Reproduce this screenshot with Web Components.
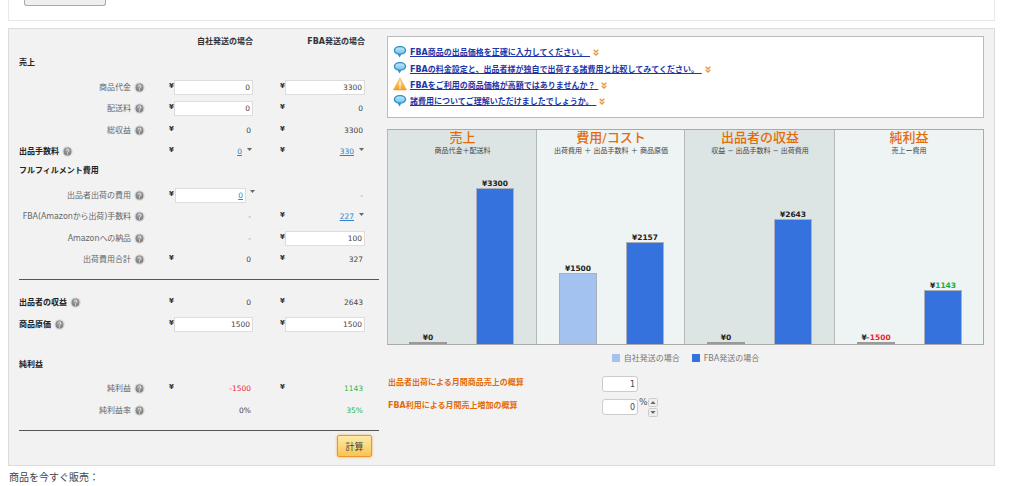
<!DOCTYPE html>
<html lang="ja"><head><meta charset="utf-8"><title>FBA</title>
<style>
html,body{margin:0;padding:0;background:#fff;overflow:hidden;height:486px}
body{font-family:"DejaVu Sans","Noto Sans CJK JP",sans-serif;font-size:8px;color:#444}
</style></head><body>
<x-page>
  <x-topbox></x-topbox>
  <x-panel>
    <x-calc slot="left">
      <x-row h="22"><span slot="a" class="hd">自社発送の場合</span><span slot="b" class="hd">FBA発送の場合</span></x-row>
      <x-row h="20"><x-label slot="label" strong nohelp>売上</x-label></x-row>
      <x-row mt="4.25"><x-label slot="label">商品代金</x-label><x-money slot="a" mode="field" value="0"></x-money><x-money slot="b" mode="field" value="3300"></x-money></x-row>
      <x-row><x-label slot="label">配送料</x-label><x-money slot="a" mode="field" value="0"></x-money><x-money slot="b" value="0"></x-money></x-row>
      <x-row><x-label slot="label">総収益</x-label><x-money slot="a" value="0"></x-money><x-money slot="b" value="3300"></x-money></x-row>
      <x-row><x-label slot="label" strong>出品手数料</x-label><x-money slot="a" mode="link" value="0"></x-money><x-money slot="b" mode="link" value="330"></x-money></x-row>
      <x-row h="16"><x-label slot="label" strong nohelp>フルフィルメント費用</x-label></x-row>
      <x-row mt="6"><x-label slot="label">出品者出荷の費用</x-label><x-money slot="a" mode="fieldlink" value="0"></x-money><x-money slot="b" noyen value="-" color="#888"></x-money></x-row>
      <x-row><x-label slot="label" class="tight">FBA(Amazonから出荷)手数料</x-label><x-money slot="a" noyen value="-" color="#888"></x-money><x-money slot="b" mode="link" value="227"></x-money></x-row>
      <x-row><x-label slot="label" class="tight">Amazonへの納品</x-label><x-money slot="a" noyen value="-" color="#888"></x-money><x-money slot="b" mode="field" value="100"></x-money></x-row>
      <x-row><x-label slot="label">出荷費用合計</x-label><x-money slot="a" value="0"></x-money><x-money slot="b" value="327"></x-money></x-row>
      <x-rule mt="9"></x-rule>
      <x-row mt="11.5"><x-label slot="label" strong>出品者の収益</x-label><x-money slot="a" value="0"></x-money><x-money slot="b" value="2643"></x-money></x-row>
      <x-row><x-label slot="label" strong>商品原価</x-label><x-money slot="a" mode="field" value="1500"></x-money><x-money slot="b" mode="field" value="1500"></x-money></x-row>
      <x-row h="16" mt="21.75"><x-label slot="label" strong nohelp>純利益</x-label></x-row>
      <x-row mt="5.25"><x-label slot="label">純利益</x-label><x-money slot="a" value="-1500" color="#f0283c"></x-money><x-money slot="b" value="1143" color="#1fb84a"></x-money></x-row>
      <x-row><x-label slot="label">純利益率</x-label><x-money slot="a" noyen value="0%"></x-money><x-money slot="b" noyen value="35%" color="#1fb84a"></x-money></x-row>
      <x-rule mt="9"></x-rule>
      <x-calc-btn>計算</x-calc-btn>
    </x-calc>
    <x-side slot="right">
      <x-notes>
        <x-tip icon="bubble">FBA商品の出品価格を正確に入力してください。&nbsp;</x-tip>
        <x-tip icon="bubble">FBAの料金設定と、出品者様が独自で出荷する諸費用と比較してみてください。&nbsp;</x-tip>
        <x-tip icon="warn">FBAをご利用の商品価格が高額ではありませんか？&nbsp;</x-tip>
        <x-tip icon="bubble">諸費用についてご理解いただけましたでしょうか。&nbsp;</x-tip>
      </x-notes>
      <x-chart>
        <x-chart-col title="売上" sub="商品代金＋配送料" tone="a">
          <x-bar zero v="¥0"></x-bar><x-bar h="156" v="¥3300"></x-bar>
        </x-chart-col>
        <x-chart-col title="費用/コスト" sub="出荷費用 ＋ 出品手数料 ＋ 商品原価" tone="b">
          <x-bar h="71" light v="¥1500"></x-bar><x-bar h="102" v="¥2157"></x-bar>
        </x-chart-col>
        <x-chart-col title="出品者の収益" sub="収益 − 出品手数料 − 出荷費用" tone="a">
          <x-bar zero v="¥0"></x-bar><x-bar h="125" v="¥2643"></x-bar>
        </x-chart-col>
        <x-chart-col title="純利益" sub="売上ー費用" tone="b">
          <x-bar zero v="¥" n="-1500" c="#f01e32"></x-bar><x-bar h="54" v="¥" n="1143" c="#12b040"></x-bar>
        </x-chart-col>
      </x-chart>
      <x-legend></x-legend>
      <x-estimate label="出品者出荷による月間商品売上の概算" value="1"></x-estimate>
      <x-estimate label="FBA利用による月間売上増加の概算" value="0" spin></x-estimate>
    </x-side>
  </x-panel>
  <x-sell>商品を今すぐ販売：</x-sell>
</x-page>
<script>
const def=(name,css,html,init)=>{
  customElements.define(name,class extends HTMLElement{
    constructor(){super();this.attachShadow({mode:'open'})}
    connectedCallback(){
      const h=typeof html==='function'?html(this):html;
      this.shadowRoot.innerHTML='<style>'+css+'</style>'+h;
      if(init)init(this);
    }
  });
};
const F='"DejaVu Sans","Noto Sans CJK JP",sans-serif';

def('x-page',`:host{display:block;margin-left:8px;width:987px;height:486px;overflow:hidden;font-family:${F}}`,'<slot></slot>');

def('x-topbox',`:host{display:block;box-sizing:border-box;height:21px;background:#fff;border:1px solid #e8e8e8;border-top:0;padding-left:15px;margin-bottom:7px}
.b{box-sizing:border-box;width:82px;height:6px;background:#efefef;border:1px solid #a9a9a9;border-top:0;border-radius:0 0 3px 3px}`,'<div class="b"></div>');

def('x-panel',`:host{display:flex;box-sizing:border-box;height:438px;background:#f2f2f2;border:1px solid #dcdcdc;padding:1px 0 0 10px;gap:8px}`,
 '<slot name="left"></slot><slot name="right"></slot>');

def('x-calc',`:host{display:flex;flex-direction:column;width:360px}`,'<slot></slot>');

def('x-row',`:host{display:grid;grid-template-columns:127px 24px 83px 28px 84px 14px;align-items:center;height:var(--h,21.5px);margin-top:var(--mt,0);color:#444}
.a{grid-column:3;display:block}.b{grid-column:5;display:block}.l{grid-column:1;display:block}
::slotted(.hd){display:block;text-align:right;font-weight:700;color:#333;font-size:8px;line-height:10px;padding-top:2px}`,
 `<div class="l"><slot name="label"></slot></div><div class="a"><slot name="a"></slot></div><div class="b"><slot name="b"></slot></div>`,
 el=>{ if(el.hasAttribute('h'))el.style.setProperty('--h',el.getAttribute('h')+'px');
       if(el.hasAttribute('mt'))el.style.setProperty('--mt',el.getAttribute('mt')+'px'); });

const help=`<svg width="11" height="11" viewBox="0 0 11 11" style="flex:none"><defs><radialGradient id="hg" cx=".5" cy=".35" r=".7"><stop offset="0" stop-color="#a8a8a8"/><stop offset="1" stop-color="#777"/></radialGradient></defs><circle cx="5.5" cy="5.5" r="5.2" fill="#d8d8d8"/><circle cx="5.5" cy="5.5" r="3.9" fill="url(#hg)"/><path d="M4.2 4.4a1.4 1.3 0 1 1 1.9 1.2c-.5.2-.6.5-.6.9" fill="none" stroke="#eee" stroke-width=".9"/><circle cx="5.5" cy="7.9" r=".55" fill="#eee"/></svg>`;

def('x-label',`:host{display:flex;align-items:center;gap:3px;height:11px;font-size:8px;line-height:11px;color:#666;white-space:nowrap;justify-content:flex-end;padding-right:1px}
:host(.tight) span{letter-spacing:-.1px}
:host([strong]){justify-content:flex-start;font-weight:700;color:#222}
:host([nohelp]){color:#222}`,
 el=>`<span><slot></slot></span>${el.hasAttribute('nohelp')?'':help}`);

const caret=`<svg width="5" height="3" viewBox="0 0 5 3" class="c"><path d="M0 0h5L2.5 3z" fill="#666"/></svg>`;
def('x-money',`:host{display:flex;align-items:center;height:15px;font-size:7.5px;color:var(--c,#444);white-space:nowrap}
.y{flex:none;width:4px;font-weight:700;color:#333;font-size:7px;line-height:8px;margin-bottom:3px;margin-left:-1px;margin-right:1px}
.rest{flex:1;text-align:right;padding-right:2px;line-height:15px}
.f{flex:1;box-sizing:border-box;height:15px;background:#fff;border:1px solid #ddd;text-align:right;padding-right:2px;line-height:14px;color:#444}
.fw{display:flex;flex:1;align-items:flex-start;gap:4px}
.fw .f{flex:none;width:71px;margin-left:1px}
.fw .c{margin-top:2px}
a{color:#2e7fd0;text-decoration:underline}
.lk{flex:1;display:flex;justify-content:flex-end;align-items:center;gap:5px;padding-right:1px}
.lk .c{margin-bottom:4px}`,
 el=>{
  const v=el.getAttribute('value'),m=el.getAttribute('mode')||'plain';
  const c=el.getAttribute('color'); if(c)el.style.setProperty('--c',c);
  const y=el.hasAttribute('noyen')?'<span class="y"></span>':'<span class="y">¥</span>';
  if(m==='field')return y+`<span class="f">${v}</span>`;
  if(m==='link')return y+`<span class="lk"><a>${v}</a>${caret}</span>`;
  if(m==='fieldlink')return y+`<span class="fw"><span class="f"><a>${v}</a></span>${caret}</span>`;
  return y+`<span class="rest">${v}</span>`;
 });

def('x-rule',`:host{display:block;height:0;border-top:1.5px solid #555;margin-top:var(--mt,0)}`,'',
 el=>el.style.setProperty('--mt',el.getAttribute('mt')+'px'));

def('x-calc-btn',`:host{display:flex;align-items:center;justify-content:center;align-self:flex-end;box-sizing:border-box;width:35px;height:22px;margin:4.5px 7px 0 0;
 background:linear-gradient(#fdeba9,#f7c552);border:1px solid #ee922b;border-radius:2px;box-shadow:0 0 3px #f4b266;font-size:9px;color:#444}`,'<slot></slot>');

def('x-side',`:host{display:flex;flex-direction:column;width:597px;padding-top:6px}`,'<slot></slot>');

def('x-notes',`:host{display:flex;flex-direction:column;box-sizing:border-box;height:82px;background:#fff;border:1px solid #bbb;padding:6.5px 0 0 5px}`,'<slot></slot>');

const icons={
 bubble:`<svg width="14" height="14" viewBox="0 0 14 14"><defs><linearGradient id="bb" x1="0" y1="0" x2="0" y2="1"><stop offset="0" stop-color="#bfe6f8"/><stop offset="1" stop-color="#7cc4e8"/></linearGradient></defs><path d="M7 1C3.4 1 .8 2.9.8 5.4c0 2 1.7 3.6 4 4.1L6.6 12.6 8.2 9.6c2.9-.4 5-2.1 5-4.2C13.2 2.9 10.6 1 7 1z" fill="#2f93c6"/><ellipse cx="7" cy="5.3" rx="4.8" ry="3.1" fill="url(#bb)"/></svg>`,
 warn:`<svg width="14" height="14" viewBox="0 0 14 14"><defs><linearGradient id="wg" x1="0" y1="0" x2="0" y2="1"><stop offset="0" stop-color="#fde2a0"/><stop offset="1" stop-color="#f79c12"/></linearGradient></defs><path d="M7 .8 13.6 13H.4z" fill="url(#wg)" stroke="#f4a030" stroke-width=".5"/><path d="M7 5v4.5" stroke="#fff" stroke-width="1.3"/><circle cx="7" cy="11" r=".8" fill="#fff"/></svg>`
};
def('x-tip',`:host{display:flex;align-items:center;height:16.4px;font-size:8px;white-space:nowrap}
.i{display:flex;flex:none;width:17px}
a{color:#1f36a8;font-weight:700;text-decoration:underline}
.ch{margin-left:3px;margin-top:2px}`,
 el=>`<span class="i">${icons[el.getAttribute('icon')]}</span><a><slot></slot></a><svg class="ch" width="6" height="7" viewBox="0 0 6 7"><path d="M.7 .8 3 3 5.3 .8M.7 3.8 3 6 5.3 3.8" fill="none" stroke="#e8943a" stroke-width="1.3"/></svg>`);

def('x-chart',`:host{display:grid;grid-template-columns:149px 148px 150px 1fr;box-sizing:border-box;height:216px;margin-top:11px;border:1px solid #aaa;border-right-width:1.5px}`,'<slot></slot>');

def('x-chart-col',`:host{display:flex;flex-direction:column;min-width:0;border-left:1px solid #b4b8b8;margin-left:-1px;background:#dde5e4}
:host([tone=b]){background:#eef3f4}
:host(:first-child) .bars{padding-left:21px}
.t{text-align:center;font-size:13px;line-height:16px;font-weight:500;color:#e36c0a;white-space:nowrap}
.s{text-align:center;font-size:7px;line-height:9px;margin-top:1px;color:#444;white-space:nowrap}
.bars{flex:1;display:flex;align-items:flex-end;gap:29px;padding-left:22px}`,
 el=>`<div class="t">${el.getAttribute('title')}</div><div class="s">${el.getAttribute('sub')}</div><div class="bars"><slot></slot></div>`);

def('x-bar',`:host{display:flex;flex-direction:column;align-items:center;width:38px}
.v{font-size:7.5px;line-height:9px;font-weight:700;color:#222;white-space:nowrap;margin-bottom:.5px}
.b{box-sizing:border-box;width:100%;background:#3572de;border:1px solid #a9b0bb;border-bottom:0}
:host([light]) .b{background:#a4c2ef}
:host([zero]) .b{height:2px;background:#9a9a9a;border:0}`,
 el=>{const h=el.getAttribute('h'),n=el.getAttribute('n');
  return `<span class="v">${el.getAttribute('v')}${n?`<span style="color:${el.getAttribute('c')}">${n}</span>`:''}</span><div class="b" style="${h?`height:${h}px`:''}"></div>`;});

def('x-legend',`:host{display:flex;justify-content:center;align-items:center;gap:12px;height:13px;margin-top:6px;font-size:8px;color:#777;white-space:nowrap;margin-bottom:8px}
span{display:flex;align-items:center;gap:4px}
i{display:block;width:8px;height:8px;background:#a4c2ef}
.f i{background:#3572de}`,
 `<span><i></i>自社発送の場合</span><span class="f"><i></i>FBA発送の場合</span>`);

def('x-estimate',`:host{display:grid;grid-template-columns:214px 36px auto;align-items:center;height:23px;font-size:8px;color:#e36c0a;font-weight:700;padding-left:1px;white-space:nowrap}
.lb{margin-bottom:4px}
.in{box-sizing:border-box;height:16px;background:#fff;border:1px solid #ccc;border-radius:3px;text-align:right;padding-right:2px;line-height:15px;color:#444;font-weight:400;font-size:8px}
.sp{display:flex;align-items:flex-start;margin-left:1px;color:#555;font-weight:400;font-size:9px;line-height:11px}
.st{display:flex;flex-direction:column;gap:1px;margin-left:0;padding-top:1px}
.st svg{display:block}`,
 el=>`<span class="lb">${el.getAttribute('label')}</span><span class="in">${el.getAttribute('value')}</span>`+
 (el.hasAttribute('spin')?`<span class="sp">%<span class="st"><svg width="10" height="9" viewBox="0 0 10 9"><rect x=".5" y=".5" width="9" height="8" rx="1" fill="#eee" stroke="#ccc"/><path d="M2.5 6h5L5 3z" fill="#666"/></svg><svg width="10" height="9" viewBox="0 0 10 9"><rect x=".5" y=".5" width="9" height="8" rx="1" fill="#eee" stroke="#ccc"/><path d="M2.5 3h5L5 6z" fill="#666"/></svg></span></span>`:''));

def('x-sell',`:host{display:block;font-size:10px;line-height:14px;padding-top:5px;margin-left:1px;color:#444;white-space:nowrap}`,'<slot></slot>');
</script>
</body></html>
